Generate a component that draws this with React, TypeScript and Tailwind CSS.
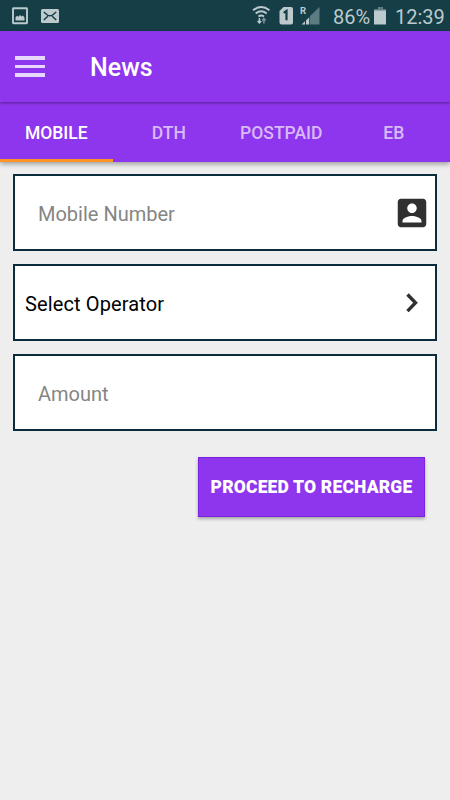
import type { ReactNode } from 'react';

const StatusBar = () => (
  <div className="flex h-[31px] items-center bg-[#153e47] text-[#bccacd]">
    <svg width="70" height="31" viewBox="0 0 70 31" fill="none">
      <rect x="13" y="8.2" width="14" height="15" rx="0.5" stroke="currentColor" strokeWidth="1.9" />
      <path d="M15.5 20.5v-3.3l1.5-1.5 1.3 1 1.7-1.7 1.5 1.5 1.4-1 1.6 2v3z" fill="currentColor" />
      <rect x="41" y="9" width="18" height="14" rx="1.5" fill="currentColor" />
      <path d="M43.8 12l3.6 3q1 .8 2.6.8t2.6-.8l3.600-3M43.8 20l4-3.700M56.2 20l-4-3.700" stroke="#153e47" strokeWidth="1.5" />
    </svg>
    <svg className="ml-auto" width="80" height="31" viewBox="250 0 80 31" fill="none">
      <path d="M253 10.3q8.2-6.4 16.4 0M255.7 13.6q5.5-4.5 11 0M258.4 16.5q2.8-2.2 5.6 0" stroke="currentColor" strokeWidth="1.9" />
      <path d="M259.4 18v5M257.6 21l1.8 2 1.8-2" stroke="currentColor" strokeWidth="1.5" />
      <path d="M263.9 23.5v-5M262.2 20.5l1.7-2 1.7 2" stroke="#7d9499" strokeWidth="1.5" />
      <path d="M283.5 7H291q2 0 2 2v13.5q0 2-2 2h-9.5q-2 0-2-2V11z" fill="currentColor" />
      <path d="M283.7 12.8l2.8-2v9.4" stroke="#153e47" strokeWidth="2.2" />
      <text x="300" y="14" fontSize="9.5" fontWeight="700" fill="currentColor" className="font-['Roboto',sans-serif]">R</text>
      <path d="M319.5 7v17.5H310v-8.5z" fill="#5d7b82" />
      <path d="M301.5 24.5l3.500-3.200v3.200zM306 20.400l3.200-3.200v7.300H306z" fill="currentColor" />
    </svg>
    <span className="ml-[3px] w-[37px] whitespace-nowrap pt-[3px] text-[20px] leading-7">86%</span>
    <svg className="ml-1" width="12" height="31" viewBox="0 0 12 31">
      <path d="M4 7h5v2h3v2H0V9h4z" fill="#617d83" />
      <path d="M0 10.5h12V24.5H0z" fill="currentColor" />
    </svg>
    <span className="ml-[9px] w-[55px] whitespace-nowrap pt-[3px] text-[20px] leading-7">12:39</span>
  </div>
);

const AppBar = () => (
  <header className="relative flex h-[71px] items-center bg-[#8e36ed] pl-[15px] shadow-[0_1px_3px_rgba(0,0,0,0.4)]">
    <button className="flex w-[30px] flex-col gap-[5px]" aria-label="Menu">
      <span className="h-[3.5px] bg-[#e8d7fc]" />
      <span className="h-[3.5px] bg-[#e8d7fc]" />
      <span className="h-[3.5px] bg-[#e8d7fc]" />
    </button>
    <h1 className="ml-[45px] pt-[3px] text-[25px] font-medium text-white">News</h1>
  </header>
);

const tabs = ['MOBILE', 'DTH', 'POSTPAID', 'EB'];

const TabBar = () => (
  <nav className="grid h-[60px] grid-cols-4 bg-[#8e36ed] shadow-[0_2px_5px_rgba(0,0,0,0.35)]">
    {tabs.map((tab, index) => (
      <button
        key={tab}
        className={`border-b-[3px] pt-[5px] text-[17.5px] font-medium ${
          index === 0 ? 'border-[#ff9428] text-white' : 'border-transparent text-[#d9baf8]'
        }`}
      >
        {tab}
      </button>
    ))}
  </nav>
);

const Field = ({ children, className = '' }: { children: ReactNode; className?: string }) => (
  <div
    className={`flex h-[77px] items-center justify-between border-2 border-[#0d2c3b] bg-white pt-[3px] text-[20px] ${className}`}
  >
    {children}
  </div>
);

export default function App() {
  return (
    <div className="min-h-screen w-full bg-[#eeeeee] font-['Roboto',sans-serif]">
      <StatusBar />
      <AppBar />
      <TabBar />
      <main className="flex flex-col gap-[13px] px-[13px] pt-3">
        <Field className="pl-[23px] pr-1 text-[#858585]">
          <span>Mobile Number</span>
          <svg className="mb-[3px]" width="38" height="38" viewBox="0 0 24 24" fill="#303030">
            <path d="M3 5v14c0 1.1.89 2 2 2h14c1.1 0 2-.9 2-2V5c0-1.1-.9-2-2-2H5c-1.11 0-2 .9-2 2zm12 4c0 1.66-1.34 3-3 3s-3-1.34-3-3 1.34-3 3-3 3 1.34 3 3zm-9 8c0-2 4-3.1 6-3.1s6 1.1 6 3.1v1H6v-1z" />
          </svg>
        </Field>
        <Field className="pl-[10px] pr-[6px] text-black">
          <span className="tracking-[0.12px]">Select Operator</span>
          <svg className="mb-[3px]" width="34" height="34" viewBox="0 0 34 34" fill="none">
            <path d="M12.5 8.5l8 8.3-8 8.3" stroke="#303030" strokeWidth="3.4" />
          </svg>
        </Field>
        <Field className="pl-[23px] text-[#858585]">
          <span>Amount</span>
        </Field>
        <button className="mr-3 mt-[13px] h-[60px] w-[227px] self-end whitespace-nowrap border border-[#7c22dc] bg-[#8e36ed] pt-[1px] text-[17.5px] font-black tracking-[0.17px] text-white shadow-[0_2px_3px_rgba(0,0,0,0.3)]">
          PROCEED TO RECHARGE
        </button>
      </main>
    </div>
  );
}
